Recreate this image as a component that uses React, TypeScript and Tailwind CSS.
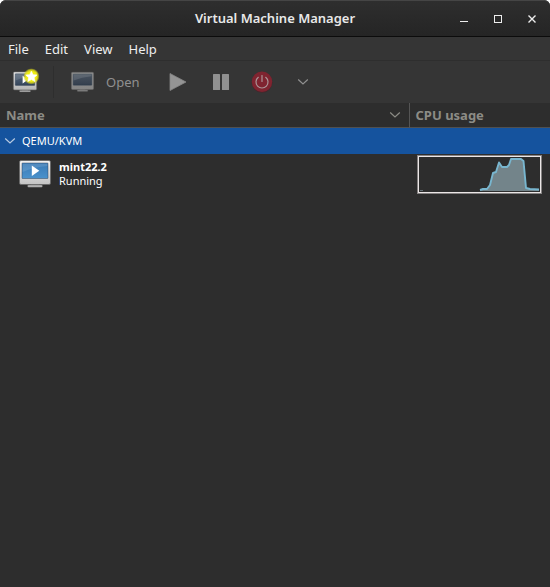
import { useId, useState } from "react";

const menus = ["File", "Edit", "View", "Help"];

const machines = [
  {
    name: "mint22.2",
    status: "Running",
    cpu: "63,35 66,34 70,34 73,30 76,18 79,17 82,7.5 85,12 90,12 92,10 94,4 104,4 106.5,6 109,33 113,34 122,34.5",
  },
];

function Chevron({ className }: { className?: string }) {
  return (
    <svg width="12" height="8" viewBox="0 0 12 8" className={className} aria-hidden="true">
      <path d="M1.2 1.5 L6 6 L10.8 1.5" fill="none" stroke="currentColor" strokeWidth="1.2" />
    </svg>
  );
}

type MonitorProps = {
  width: number;
  height: number;
  screen: [string, string];
  frame: [string, string];
  play?: boolean;
  star?: boolean;
};

// Desktop monitor, drawn on a 32x28 grid
function Monitor({ width, height, screen, frame, play, star }: MonitorProps) {
  const id = useId();
  return (
    <svg width={width} height={height} viewBox="0 0 32 28" className="overflow-visible" aria-hidden="true">
      <defs>
        <linearGradient id={`${id}s`} x1="0" y1="0" x2="0" y2="1">
          <stop offset="0" stopColor={screen[0]} />
          <stop offset="1" stopColor={screen[1]} />
        </linearGradient>
        <linearGradient id={`${id}f`} x1="0" y1="0" x2="0" y2="1">
          <stop offset="0" stopColor={frame[0]} />
          <stop offset="1" stopColor={frame[1]} />
        </linearGradient>
        <radialGradient id={`${id}g`}>
          <stop offset="0.6" stopColor="#f0ee10" />
          <stop offset="0.8" stopColor="#dcd818" stopOpacity="0.8" />
          <stop offset="1" stopColor="#c8c820" stopOpacity="0" />
        </radialGradient>
      </defs>
      <rect x="12" y="24" width="8" height="2" fill="#7c7c7c" />
      <rect x="8.5" y="25" width="15" height="2.2" rx="1" fill={frame[1]} stroke="#4a4a4a" strokeWidth="0.5" />
      <rect x="0.5" y="0.5" width="31" height="24" rx="1.5" fill={`url(#${id}f)`} stroke="#666" strokeWidth="0.8" />
      <rect x="3" y="3" width="26" height="15.5" rx="0.5" fill={`url(#${id}s)`} stroke="#1d3046" strokeOpacity="0.5" strokeWidth="0.8" />
      <path d="M3.5 3.5 H28.5 V6 Q15 7 3.5 12 Z" fill="#fff" fillOpacity="0.12" />
      {play && <path d="M12.8 5.5 L20.3 10.7 L12.8 16 Z" fill="#fff" />}
      {star && (
        <>
          <circle cx="24.5" cy="6.5" r="11" fill={`url(#${id}g)`} />
          <path
            d="M24.5 -0.5 L26.8 4.2 L32 4.6 L28.2 8.2 L29.3 13.4 L24.5 10.8 L19.7 13.4 L20.8 8.2 L17 4.6 L22.2 4.2 Z"
            fill="#fff"
            stroke="#fff"
            strokeWidth="0.8"
          />
        </>
      )}
    </svg>
  );
}

function CpuGraph({ points }: { points: string }) {
  return (
    <svg width="125" height="39" viewBox="0 0 125 39" className="block" role="img" aria-label="CPU usage">
      <rect x="0.5" y="0.5" width="124" height="38" fill="none" stroke="#858282" />
      <rect x="1.5" y="1.5" width="122" height="36" fill="none" stroke="#ebe6e6" />
      <path d="M3 35.5 H6" stroke="#667176" />
      <polygon points={`${points} 122,36 63,36`} fill="#73848a" />
      <polyline points={points} fill="none" stroke="#78b6cf" strokeWidth="1.9" strokeLinejoin="round" />
    </svg>
  );
}

function TitleBar() {
  return (
    <header className="grid h-[37px] grid-cols-[1fr_auto_1fr] items-center rounded-t-md border-t border-b border-t-[#454545] border-b-[#0c0c0c] bg-linear-to-b from-[#2e2e2e] to-[#252525]">
      <h1 className="col-start-2 text-[13px] font-semibold text-[#e8e8e8]">Virtual Machine Manager</h1>
      <div className="flex justify-end gap-2.5 pr-1.5 text-[#eeeeee]">
        <button aria-label="Minimize" className="grid size-6 place-items-center">
          <svg width="8" height="8" viewBox="0 0 8 8">
            <path d="M0 6.5 H8" stroke="currentColor" />
          </svg>
        </button>
        <button aria-label="Maximize" className="grid size-6 place-items-center">
          <svg width="8" height="8" viewBox="0 0 8 8">
            <rect x="0.5" y="0.5" width="7" height="7" fill="none" stroke="currentColor" />
          </svg>
        </button>
        <button aria-label="Close" className="grid size-6 place-items-center">
          <svg width="8" height="8" viewBox="0 0 8 8">
            <path d="M0.5 0.5 L7.5 7.5 M7.5 0.5 L0.5 7.5" stroke="currentColor" strokeWidth="1.4" />
          </svg>
        </button>
      </div>
    </header>
  );
}

function Toolbar() {
  return (
    <div role="toolbar" className="flex h-[42px] items-center bg-[#353535] text-[#909090]">
      <button aria-label="New virtual machine" className="grid h-8 w-[53px] place-items-center pr-1">
        <Monitor width={24} height={22} screen={["#5c6b7d", "#34455b"]} frame={["#e4e4e4", "#b5b5b5"]} play star />
      </button>
      <span className="h-8 w-px bg-[#2e2e2e]" />
      <button className="ml-[17px] flex items-center gap-3 text-[13px]">
        <Monitor width={23} height={20} screen={["#4a5460", "#343f4e"]} frame={["#8c8c8c", "#858585"]} />
        <span className="pt-0.5">Open</span>
      </button>
      <button aria-label="Run" className="ml-[22px] grid size-8 place-items-center">
        <svg width="18" height="18" viewBox="0 0 18 18">
          <path d="M1 0.5 L17 9 L1 17.5 Z" fill="#949494" stroke="#868686" strokeWidth="0.8" strokeLinejoin="round" />
        </svg>
      </button>
      <button aria-label="Pause" className="ml-[11px] grid size-8 place-items-center">
        <svg width="16" height="16" viewBox="0 0 16 16" fill="#909090">
          <rect width="7" height="16" rx="0.5" />
          <rect x="9" width="7" height="16" rx="0.5" />
        </svg>
      </button>
      <button aria-label="Shut down" className="ml-[9px] grid size-8 place-items-center">
        <svg width="22" height="22" viewBox="0 0 22 22" fill="none" strokeLinecap="round">
          <circle cx="11" cy="11.3" r="10.4" fill="#4a252b" />
          <circle cx="11" cy="10.8" r="10.2" fill="#7f2430" />
          <path d="M7.3 6.3 A6 6 0 1 0 14.7 6.3" stroke="#aa9497" strokeWidth="1.2" />
          <path d="M11 4.5 V10.5" stroke="#aa9497" strokeWidth="1.2" />
        </svg>
      </button>
      <button aria-label="Shut down options" className="ml-[9px] grid size-8 place-items-center">
        <Chevron />
      </button>
    </div>
  );
}

export default function App() {
  const [open, setOpen] = useState(true);

  return (
    <div className="bg-white font-['Noto_Sans','Open_Sans',sans-serif]">
      <div className="flex min-h-screen flex-col rounded-t-md bg-[#2d2d2d]">
        <TitleBar />

        <nav className="flex h-6 items-center gap-4 border-b border-[#2e2e2e] bg-[#353535] px-2 pt-0.5 text-[13px] text-[#eeeeee]">
          {menus.map((menu) => (
            <button key={menu}>{menu}</button>
          ))}
        </nav>

        <Toolbar />

        <table className="w-full table-fixed border-collapse text-left">
          <colgroup>
            <col />
            <col className="w-[141px]" />
          </colgroup>
          <thead>
            <tr className="h-6 border-b border-[#505050] text-[13px] leading-5 text-[#8c8c86]">
              <th className="border-r border-[#555555] py-0 pr-2 pl-1.5">
                <button className="flex w-full items-center justify-between font-bold">
                  Name
                  <Chevron />
                </button>
              </th>
              <th className="py-0 pl-1.5">
                <button className="font-bold">CPU usage</button>
              </th>
            </tr>
          </thead>
          <tbody>
            <tr className="h-[27px] bg-[#15539e] text-[11px] leading-4 text-white">
              <td colSpan={2} className="p-0">
                <button aria-expanded={open} onClick={() => setOpen(!open)} className="flex w-full items-center gap-1.5 pl-1">
                  <Chevron className={open ? "text-[#b9cbe2]" : "-rotate-90 text-[#b9cbe2]"} />
                  QEMU/KVM
                </button>
              </td>
            </tr>
            {open &&
              machines.map((vm) => (
                <tr key={vm.name} className="h-10 text-[11px] leading-[14px] text-white">
                  <td className="p-0">
                    <div className="flex items-center gap-2 pl-[19px]">
                      <Monitor width={32} height={28} screen={["#3a7ab5", "#4a92cc"]} frame={["#f2f2f2", "#c4c4c4"]} play />
                      <div>
                        <div className="font-bold">{vm.name}</div>
                        <div>{vm.status}</div>
                      </div>
                    </div>
                  </td>
                  <td className="p-0 pl-2">
                    <CpuGraph points={vm.cpu} />
                  </td>
                </tr>
              ))}
          </tbody>
        </table>
      </div>
    </div>
  );
}
